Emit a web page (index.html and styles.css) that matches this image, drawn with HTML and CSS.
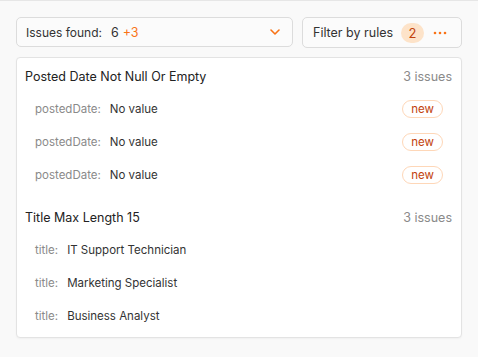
FILE: index.html
```html
<!DOCTYPE html>
<html>
<head>
<meta charset="utf-8">
<link rel="stylesheet" href="styles.css">
</head>
<body>
<div class="panel">
  <div class="toolbar">
    <div class="select">
      <span class="select-label">Issues found:</span>
      <span class="count">6</span>
      <span class="delta">+3</span>
      <svg class="chevron" width="10" height="6" viewBox="0 0 10 6"><path d="M1 1l4 4 4-4" fill="none" stroke="#f97316" stroke-width="1.6" stroke-linecap="round" stroke-linejoin="round"/></svg>
    </div>
    <div class="filter">
      <span class="filter-label">Filter by rules</span>
      <span class="badge">2</span>
      <svg class="dots" width="14" height="4" viewBox="0 0 14 4"><circle cx="2" cy="2" r="1.3" fill="#f97316"/><circle cx="7" cy="2" r="1.3" fill="#f97316"/><circle cx="12" cy="2" r="1.3" fill="#f97316"/></svg>
    </div>
  </div>
  <div class="card">
    <div class="group">
      <div class="group-head"><span class="rule">Posted Date Not Null Or Empty</span><span class="issues">3 issues</span></div>
      <div class="row"><span class="key">postedDate:</span><span class="val">No value</span><span class="tag">new</span></div>
      <div class="row"><span class="key">postedDate:</span><span class="val">No value</span><span class="tag">new</span></div>
      <div class="row"><span class="key">postedDate:</span><span class="val">No value</span><span class="tag">new</span></div>
    </div>
    <div class="group">
      <div class="group-head"><span class="rule">Title Max Length 15</span><span class="issues">3 issues</span></div>
      <div class="row"><span class="key">title:</span><span class="val">IT Support Technician</span></div>
      <div class="row"><span class="key">title:</span><span class="val">Marketing Specialist</span></div>
      <div class="row"><span class="key">title:</span><span class="val">Business Analyst</span></div>
    </div>
  </div>
</div>
</body>
</html>
```
FILE: styles.css
```css
html, body {
  margin: 0;
  padding: 0;
}
body {
  font-family: Inter, "Noto Sans", sans-serif;
  background: #f9f9f9;
  color: #2b2b2b;
  width: 478px;
  height: 357px;
  overflow: hidden;
}
.panel {
  border-top: 1px solid #e6e6e6;
  padding: 16px 16px 0 16px;
  display: flex;
  flex-direction: column;
  gap: 9px;
}
.toolbar {
  display: flex;
  gap: 9px;
  height: 31px;
}
.select, .filter {
  box-sizing: border-box;
  background: #fbfbfb;
  border: 1px solid #dcdcdc;
  border-radius: 5px;
  display: flex;
  align-items: center;
  font-size: 12.5px;
}
.select {
  flex: 1;
  padding: 0 9px 0 9px;
  height: 30px;
}
.select-label {
  color: #333;
  font-size: 12px;
  margin-right: 9px;
}
.count {
  color: #333;
  margin-right: 4px;
}
.delta {
  color: #f97316;
}
.chevron {
  margin-left: auto;
  margin-right: 3px;
}
.filter {
  width: 160px;
  padding: 0 10px;
}
.filter-label {
  color: #333;
}
.badge {
  margin-left: 8px;
  background: #fde3c9;
  color: #c2410c;
  border-radius: 10px;
  height: 20px;
  min-width: 23px;
  display: flex;
  align-items: center;
  justify-content: center;
  font-size: 13px;
}
.dots {
  margin-left: auto;
  margin-right: 4px;
}
.card {
  background: #fff;
  border: 1px solid #e3e3e3;
  border-radius: 4px;
  box-shadow: 0 1px 2px rgba(0,0,0,0.04);
  padding-bottom: 5px;
  display: flex;
  flex-direction: column;
  gap: 8px;
}
.group-head {
  box-sizing: border-box;
  height: 34px;
  display: flex;
  align-items: center;
  justify-content: space-between;
  padding: 3px 9px 0 8px;
}
.rule {
  font-size: 12.5px;
  color: #222;
}
.issues {
  font-size: 12.5px;
  color: #8a8a8a;
}
.row {
  height: 33px;
  display: flex;
  align-items: center;
  padding: 0 18px 0 18px;
  font-size: 11.5px;
}
.key {
  color: #8a8a8a;
  margin-right: 9px;
}
.val {
  color: #333;
}
.tag {
  margin-left: auto;
  border: 1px solid #fed7b8;
  border-radius: 9px;
  color: #c2410c;
  font-size: 11.5px;
  height: 16px;
  padding: 0 8px;
  display: flex;
  align-items: center;
}
```
